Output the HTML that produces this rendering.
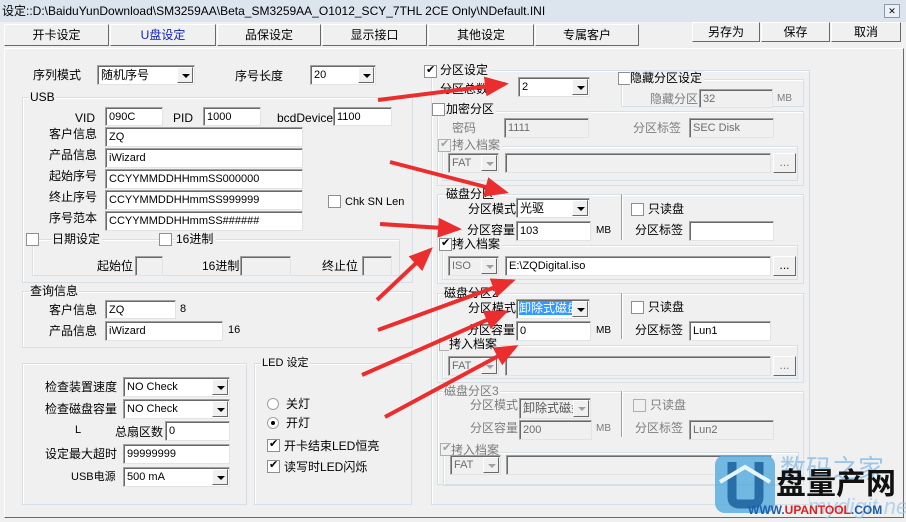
<!DOCTYPE html>
<html><head><meta charset="utf-8"><style>
*{box-sizing:border-box;margin:0;padding:0}
body{width:906px;height:522px;background:#f0f0f0;font:12px "Liberation Sans","Noto Sans CJK SC",sans-serif;color:#000;position:relative;overflow:hidden}
.a{position:absolute;white-space:nowrap;line-height:14px}
.in{position:absolute;background:#fff;border:1px solid #a0a0a0;border-right-color:#e3e3e3;border-bottom-color:#e3e3e3;box-shadow:inset 1px 1px 0 #696969;padding:2px 3px;font-size:11px;line-height:14px;white-space:nowrap;overflow:hidden}
.dis{background:#f0f0f0;color:#6d6d6d}
.sel .ar{position:absolute;right:1px;top:1px;bottom:1px;width:16px;background:#f0f0f0;border:1px solid;border-color:#fff #696969 #696969 #fff}
.sel .ar:after{content:"";position:absolute;left:4px;top:6px;border:4px solid transparent;border-top:4px solid #000;border-bottom:0}
.dis .ar:after{border-top-color:#a0a0a0}
.g{position:absolute;border:1px solid #d5dfe5;box-shadow:inset 1px 1px 0 #fff}
.g>.t{position:absolute;top:-8px;left:6px;background:#f0f0f0;padding:0 1px;line-height:14px;white-space:nowrap}
.cb{position:absolute;width:13px;height:13px;background:#fff;border:1px solid #8e8f8f}
.cb.c:after{content:"✔";position:absolute;left:1px;top:-3px;font-size:11px}
.cb.d{background:#f0f0f0;border-color:#b0b0b0;color:#a0a0a0}
.gr{color:#7d7d7d}
.btn{position:absolute;border:1px solid;border-color:#fff #696969 #696969 #fff;background:#f0f0f0;text-align:center;font-size:12px;line-height:18px}
.tab{position:absolute;top:24px;height:22px;border:1px solid;border-color:#fff #696969 #696969 #fff;background:#f0f0f0;text-align:center;line-height:20px}
</style></head><body>
<div class="a" style="left:0;top:0;width:906px;height:22px;background:#dce4ee"></div>
<div class="a" style="left:2px;top:4px;font-size:12px">设定::D:\BaiduYunDownload\SM3259AA\Beta_SM3259AA_O1012_SCY_7THL 2CE Only\NDefault.INI</div>
<div class="a" style="left:884px;top:4px;width:16px;height:14px;border:1px solid #8a98a8;background:#eef2f6;font-size:9px;text-align:center;line-height:12px">✕</div>
<div class="tab" style="left:4px;width:105px">开卡设定</div>
<div class="tab" style="left:110px;width:106px;color:#1020c0">U盘设定</div>
<div class="tab" style="left:217px;width:104px">品保设定</div>
<div class="tab" style="left:322px;width:105px">显示接口</div>
<div class="tab" style="left:428px;width:106px">其他设定</div>
<div class="tab" style="left:535px;width:104px">专属客户</div>
<div class="btn" style="left:692px;top:22px;width:68px;height:20px">另存为</div>
<div class="btn" style="left:761px;top:22px;width:69px;height:20px">保存</div>
<div class="btn" style="left:831px;top:22px;width:70px;height:20px">取消</div>
<div class="a" style="left:4px;top:48px;width:900px;height:470px;border:1px solid;border-color:#fff #696969 #696969 #fff"></div>

<div class="a" style="left:33px;top:68px">序列模式</div>
<div class="in sel" style="left:97px;top:65px;width:98px;height:20px;font-size:12px">随机序号<span class="ar"></span></div>
<div class="a" style="left:235px;top:69px">序号长度</div>
<div class="in sel" style="left:310px;top:65px;width:66px;height:20px">20<span class="ar"></span></div>

<div class="g" style="left:22px;top:97px;width:391px;height:186px"><span class="t">USB</span></div>
<div class="a" style="left:75px;top:111px">VID</div>
<div class="in" style="left:105px;top:107px;width:58px;height:19px">090C</div>
<div class="a" style="left:173px;top:111px">PID</div>
<div class="in" style="left:203px;top:107px;width:58px;height:19px">1000</div>
<div class="a" style="left:277px;top:111px">bcdDevice</div>
<div class="in" style="left:333px;top:107px;width:59px;height:19px">1100</div>
<div class="a" style="left:49px;top:127px">客户信息</div>
<div class="in" style="left:105px;top:127px;width:198px;height:20px">ZQ</div>
<div class="a" style="left:49px;top:148px">产品信息</div>
<div class="in" style="left:105px;top:148px;width:198px;height:20px">iWizard</div>
<div class="a" style="left:49px;top:169px">起始序号</div>
<div class="in" style="left:105px;top:169px;width:198px;height:20px">CCYYMMDDHHmmSS000000</div>
<div class="a" style="left:49px;top:190px">终止序号</div>
<div class="in" style="left:105px;top:190px;width:198px;height:20px">CCYYMMDDHHmmSS999999</div>
<div class="a" style="left:49px;top:211px">序号范本</div>
<div class="in" style="left:105px;top:211px;width:198px;height:20px">CCYYMMDDHHmmSS######</div>
<div class="cb" style="left:328px;top:195px"></div>
<div class="a" style="left:345px;top:195px;font-size:11px">Chk SN Len</div>
<div class="g" style="left:32px;top:239px;width:368px;height:37px"></div>
<div class="cb" style="left:26px;top:233px"></div>
<div class="a" style="left:52px;top:232px;background:#f0f0f0;padding-right:2px">日期设定</div>
<div class="cb" style="left:159px;top:233px"></div>
<div class="a" style="left:176px;top:232px;background:#f0f0f0;padding-right:3px">16进制</div>
<div class="a" style="left:97px;top:259px">起始位</div>
<div class="in dis" style="left:135px;top:256px;width:28px;height:20px"></div>
<div class="a" style="left:202px;top:259px">16进制</div>
<div class="in dis" style="left:240px;top:256px;width:51px;height:20px"></div>
<div class="a" style="left:322px;top:259px">终止位</div>
<div class="in dis" style="left:362px;top:256px;width:30px;height:20px"></div>

<div class="g" style="left:22px;top:291px;width:391px;height:57px"><span class="t" style="top:-8px;left:6px">查询信息</span></div>
<div class="a" style="left:49px;top:303px">客户信息</div>
<div class="in" style="left:105px;top:300px;width:71px;height:19px">ZQ</div>
<div class="a" style="left:180px;top:302px;font-size:11px">8</div>
<div class="a" style="left:49px;top:324px">产品信息</div>
<div class="in" style="left:105px;top:321px;width:118px;height:20px">iWizard</div>
<div class="a" style="left:228px;top:323px;font-size:11px">16</div>

<div class="g" style="left:22px;top:363px;width:225px;height:142px"></div>
<div class="a" style="left:45px;top:380px">检查装置速度</div>
<div class="in sel" style="left:123px;top:377px;width:107px;height:20px">NO Check<span class="ar"></span></div>
<div class="a" style="left:45px;top:402px">检查磁盘容量</div>
<div class="in sel" style="left:123px;top:399px;width:107px;height:20px">NO Check<span class="ar"></span></div>
<div class="a" style="left:75px;top:423px;font-size:11px">L</div>
<div class="a" style="left:115px;top:425px">总扇区数</div>
<div class="in" style="left:165px;top:421px;width:65px;height:20px">0</div>
<div class="a" style="left:45px;top:447px">设定最大超时</div>
<div class="in" style="left:123px;top:444px;width:107px;height:20px">99999999</div>
<div class="a" style="left:71px;top:470px;font-size:11px">USB电源</div>
<div class="in sel" style="left:123px;top:467px;width:107px;height:20px">500 mA<span class="ar"></span></div>

<div class="g" style="left:254px;top:363px;width:158px;height:142px"><span class="t" style="left:6px;font-size:11px">LED 设定</span></div>
<div class="a" style="left:267px;top:398px;width:12px;height:12px;border:1px solid #a0a0a0;border-radius:50%;background:#fff"></div>
<div class="a" style="left:286px;top:397px">关灯</div>
<div class="a" style="left:267px;top:417px;width:12px;height:12px;border:1px solid #a0a0a0;border-radius:50%;background:#fff"><div style="position:absolute;left:3px;top:3px;width:4px;height:4px;border-radius:50%;background:#000"></div></div>
<div class="a" style="left:286px;top:416px">开灯</div>
<div class="cb c" style="left:267px;top:439px"></div>
<div class="a" style="left:284px;top:439px">开卡结束LED恒亮</div>
<div class="cb c" style="left:267px;top:460px"></div>
<div class="a" style="left:284px;top:460px">读写时LED闪烁</div>

<div class="g" style="left:431px;top:70px;width:379px;height:435px"></div>
<div class="cb c" style="left:424px;top:65px"></div>
<div class="a" style="left:438px;top:63px;background:#f0f0f0;padding:0 2px">分区设定</div>
<div class="a" style="left:440px;top:82px">分区总数</div>
<div class="in sel" style="left:518px;top:77px;width:72px;height:20px">2<span class="ar"></span></div>
<div class="g" style="left:621px;top:79px;width:183px;height:28px"></div>
<div class="cb" style="left:618px;top:72px"></div>
<div class="a" style="left:630px;top:71px;background:#f0f0f0;padding-right:2px">隐藏分区设定</div>
<div class="a gr" style="left:650px;top:92px">隐藏分区</div>
<div class="in dis" style="left:699px;top:89px;width:74px;height:19px">32</div>
<div class="a gr" style="left:777px;top:92px;font-size:10px">MB</div>

<div class="g" style="left:437px;top:111px;width:367px;height:75px"></div>
<div class="cb" style="left:432px;top:103px"></div>
<div class="a" style="left:446px;top:102px;background:#f0f0f0;padding-right:2px">加密分区</div>
<div class="a gr" style="left:452px;top:121px">密码</div>
<div class="in dis" style="left:504px;top:118px;width:85px;height:20px">1111</div>
<div class="a gr" style="left:633px;top:121px">分区标签</div>
<div class="in dis" style="left:689px;top:118px;width:85px;height:20px">SEC Disk</div>
<div class="g" style="left:442px;top:146px;width:356px;height:35px"></div>
<div class="cb c d" style="left:438px;top:139px"></div>
<div class="a gr" style="left:452px;top:138px;background:#f0f0f0;padding-right:2px">拷入档案</div>
<div class="in dis sel" style="left:448px;top:153px;width:51px;height:20px">FAT<span class="ar"></span></div>
<div class="in dis" style="left:505px;top:153px;width:266px;height:20px"></div>
<div class="btn gr" style="left:773px;top:153px;width:23px;height:20px;line-height:16px">...</div>

<div class="g" style="left:437px;top:194px;width:367px;height:90px"><span class="t" style="left:7px">磁盘分区</span></div>
<div class="a" style="left:468px;top:202px">分区模式</div>
<div class="in sel" style="left:516px;top:198px;width:74px;height:20px;font-size:12px">光驱<span class="ar"></span></div>
<div class="a" style="left:621px;top:194px;width:2px;height:46px;border-left:1px solid #a0a0a0;border-right:1px solid #fff"></div>
<div class="cb" style="left:631px;top:203px"></div>
<div class="a" style="left:648px;top:202px">只读盘</div>
<div class="a" style="left:467px;top:223px">分区容量</div>
<div class="in" style="left:516px;top:221px;width:75px;height:20px">103</div>
<div class="a" style="left:596px;top:224px;font-size:10px">MB</div>
<div class="a" style="left:635px;top:223px">分区标签</div>
<div class="in" style="left:689px;top:221px;width:85px;height:20px"></div>
<div class="g" style="left:442px;top:245px;width:356px;height:35px"></div>
<div class="cb c" style="left:439px;top:238px"></div>
<div class="a" style="left:452px;top:237px;background:#f0f0f0;padding-right:2px">拷入档案</div>
<div class="in dis sel" style="left:448px;top:256px;width:51px;height:20px">ISO<span class="ar"></span></div>
<div class="in" style="left:505px;top:256px;width:266px;height:20px">E:\ZQDigital.iso</div>
<div class="btn" style="left:773px;top:256px;width:23px;height:20px;line-height:16px">...</div>

<div class="g" style="left:437px;top:293px;width:367px;height:90px"><span class="t" style="left:5px">磁盘分区2</span></div>
<div class="a" style="left:468px;top:301px">分区模式</div>
<div class="in sel" style="left:516px;top:299px;width:74px;height:20px;font-size:12px;padding:1px 2px"><span style="background:#3399ff;color:#fff">卸除式磁盘</span><span class="ar"></span></div>
<div class="a" style="left:621px;top:293px;width:2px;height:46px;border-left:1px solid #a0a0a0;border-right:1px solid #fff"></div>
<div class="cb" style="left:631px;top:301px"></div>
<div class="a" style="left:648px;top:300px">只读盘</div>
<div class="a" style="left:467px;top:323px">分区容量</div>
<div class="in" style="left:516px;top:321px;width:75px;height:20px">0</div>
<div class="a" style="left:596px;top:324px;font-size:10px">MB</div>
<div class="a" style="left:635px;top:323px">分区标签</div>
<div class="in" style="left:689px;top:321px;width:82px;height:20px">Lun1</div>
<div class="g" style="left:442px;top:345px;width:356px;height:34px"></div>
<div class="cb d" style="left:439px;top:338px"></div>
<div class="a" style="left:449px;top:337px;background:#f0f0f0;padding-right:2px">拷入档案</div>
<div class="in dis sel" style="left:448px;top:356px;width:51px;height:20px">FAT<span class="ar"></span></div>
<div class="in dis" style="left:505px;top:356px;width:266px;height:20px"></div>
<div class="btn gr" style="left:773px;top:356px;width:23px;height:20px;line-height:16px">...</div>

<div class="g" style="left:437px;top:391px;width:367px;height:94px"><span class="t gr" style="left:5px">磁盘分区3</span></div>
<div class="a gr" style="left:470px;top:398px">分区模式</div>
<div class="in dis sel" style="left:519px;top:398px;width:72px;height:21px;font-size:12px;color:#555">卸除式磁盘<span class="ar"></span></div>
<div class="a" style="left:621px;top:391px;width:2px;height:46px;border-left:1px solid #a0a0a0;border-right:1px solid #fff"></div>
<div class="cb d" style="left:633px;top:399px"></div>
<div class="a gr" style="left:650px;top:398px">只读盘</div>
<div class="a gr" style="left:470px;top:421px">分区容量</div>
<div class="in dis" style="left:519px;top:420px;width:73px;height:20px">200</div>
<div class="a gr" style="left:596px;top:422px;font-size:10px">MB</div>
<div class="a gr" style="left:635px;top:421px">分区标签</div>
<div class="in dis" style="left:689px;top:420px;width:85px;height:20px">Lun2</div>
<div class="g" style="left:443px;top:452px;width:356px;height:34px"></div>
<div class="cb c d" style="left:440px;top:443px"></div>
<div class="a gr" style="left:451px;top:443px;background:#f0f0f0;padding-right:2px">拷入档案</div>
<div class="in dis sel" style="left:450px;top:455px;width:51px;height:20px">FAT<span class="ar"></span></div>
<div class="in dis" style="left:506px;top:455px;width:266px;height:20px"></div>

<svg class="a" style="left:712px;top:452px" width="194" height="70">
<rect x="3" y="3" width="60" height="58" rx="10" fill="#5aaee0" opacity=".85"/>
<path d="M20 10 V45 Q20 52 27 52 H40 Q47 52 47 45 V10" fill="none" stroke="#2a6ea8" stroke-width="9"/>
<path d="M8 30 L33 15 L58 30" fill="none" stroke="#e8f4fb" stroke-width="4"/>
<text x="68" y="26" font-size="26" fill="#9cc6e8" font-family="Noto Sans CJK SC,sans-serif">数码之家</text>
<text x="64" y="42" font-size="30" font-weight="bold" fill="#111" font-family="Noto Sans CJK SC,sans-serif">盘量产网</text>
<text x="96" y="62" font-size="22" font-style="italic" fill="#9cc6e8" opacity=".7" font-family="Liberation Sans,sans-serif">mydigit.net</text>
<text x="36" y="62" font-size="12" font-weight="bold" fill="#1d5fa8" font-family="Liberation Sans,sans-serif">WWW.<tspan fill="#e02020">UPANTOOL</tspan>.COM</text>
</svg>

<svg class="a" style="left:0;top:0" width="906" height="522">
<defs><marker id="m" markerWidth="6" markerHeight="5" refX="5" refY="2.5" orient="auto"><path d="M0 0 L6 2.5 L0 5Z" fill="#ec2d2d"/></marker></defs>
<g stroke="#ec2d2d" stroke-width="4" fill="none" marker-end="url(#m)">
<line x1="378" y1="100" x2="505" y2="84"/>
<line x1="390" y1="162" x2="505" y2="192"/>
<line x1="380" y1="224" x2="458" y2="229"/>
<line x1="377" y1="300" x2="430" y2="250"/>
<line x1="378" y1="330" x2="512" y2="281"/>
<line x1="362" y1="375" x2="505" y2="312"/>
<line x1="385" y1="417" x2="515" y2="347"/>
</g></svg>
</body></html>
